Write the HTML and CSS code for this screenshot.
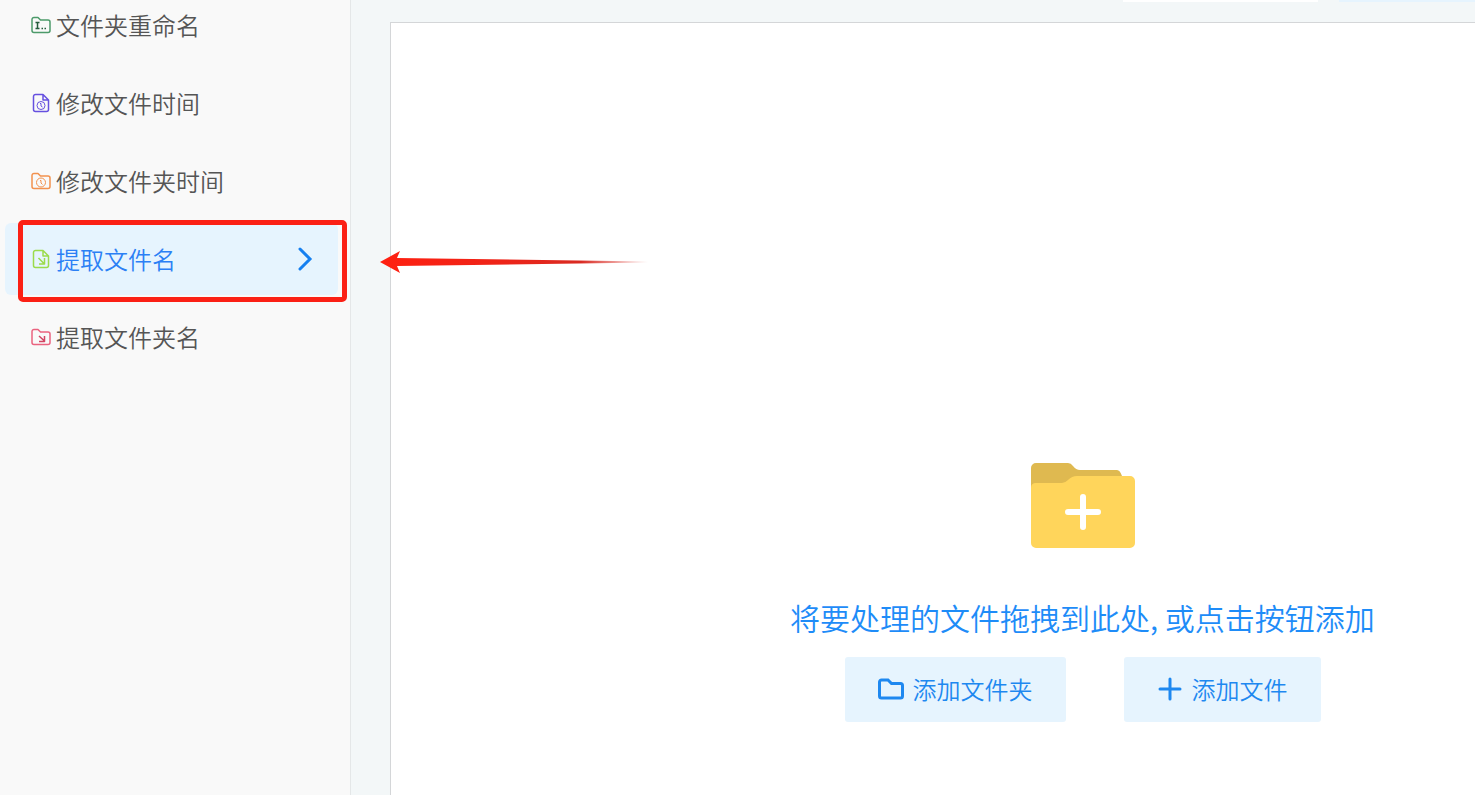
FILE: index.html
```html
<!DOCTYPE html>
<html lang="zh-CN">
<head>
  <meta charset="UTF-8">
  <meta name="viewport" content="width=device-width, initial-scale=1.0">
  <title>提取文件名</title>
  <link rel="stylesheet" href="styles.css">
</head>
<body>

  <nav class="sidebar">
    <a class="item" href="#">
      <svg class="icon green" viewBox="0 0 20 20">
        <path d="M1 15.500V4.500a2 2 0 0 1 2-2h4l2.500 2.500H17a2 2 0 0 1 2 2v8.500a2 2 0 0 1-2 2H3a2 2 0 0 1-2-2z"/>
        <path class="dark" d="M4.500 7.500h4M6.500 7.500v6M4.500 13.500h4M10.500 13.500h1.500M13.500 13.500H15"/>
      </svg>
      <span>文件夹重命名</span>
    </a>
    <a class="item" href="#">
      <svg class="icon purple" viewBox="0 0 20 20">
        <path d="M12 1.500H4.500a2 2 0 0 0-2 2v13a2 2 0 0 0 2 2h11a2 2 0 0 0 2-2V7zM12 1.500V7h5.500"/>
        <circle class="thin" cx="10" cy="12.500" r="4"/>
        <path class="thin" d="M9 10.500h1V13l1.500 1"/>
      </svg>
      <span>修改文件时间</span>
    </a>
    <a class="item" href="#">
      <svg class="icon orange" viewBox="0 0 20 20">
        <path d="M1 15.500V4.500a2 2 0 0 1 2-2h4l2.500 2.500H17a2 2 0 0 1 2 2v8.500a2 2 0 0 1-2 2H3a2 2 0 0 1-2-2z"/>
        <circle class="thin" cx="10" cy="11.500" r="4.500"/>
        <path class="thin" d="M9 9.500h1V12l1.500 1.500"/>
      </svg>
      <span>修改文件夹时间</span>
    </a>
    <a class="item active" href="#">
      <svg class="icon lime" viewBox="0 0 20 20">
        <path d="M12 1.500H4.500a2 2 0 0 0-2 2v13a2 2 0 0 0 2 2h11a2 2 0 0 0 2-2V7zM12 1.500V7h5.500"/>
        <path d="M7.500 9l5.500 5.500M13.500 9v6H8"/>
      </svg>
      <span>提取文件名</span>
      <svg class="chevron" viewBox="0 0 16 24"><path d="M3 2l10 10L3 22"/></svg>
      <i class="mark"></i>
    </a>
    <a class="item" href="#">
      <svg class="icon red" viewBox="0 0 20 20">
        <path d="M1 15.500V4.500a2 2 0 0 1 2-2h4l2.500 2.500H17a2 2 0 0 1 2 2v8.500a2 2 0 0 1-2 2H3a2 2 0 0 1-2-2z"/>
        <path class="dark" d="M8 9l5.500 5M13.500 9v5.500H8"/>
      </svg>
      <span>提取文件夹名</span>
    </a>
  </nav>

  <main class="main">
    <div class="toolbar">
      <div class="tool white"></div>
      <div class="tool blue"></div>
    </div>

    <section class="drop">
      <svg class="folder" viewBox="0 0 106 86">
        <path fill="#dfb950" d="M1 30V5a5 5 0 0 1 5-5h32q3 0 5 3 3 4 7 4h37q3 0 5 6v17z"/>
        <path fill="#ffd55b" d="M1 80V25q0-5 5-5h26q3 0 6-3 4-4 9-4h53a5 5 0 0 1 5 5v62a5 5 0 0 1-5 5H6a5 5 0 0 1-5-5z"/>
        <path stroke="#fff" stroke-width="6" stroke-linecap="round" d="M38 49h30M53 34v30"/>
      </svg>
      <p class="tip">将要处理的文件拖拽到此处, 或点击按钮添加</p>
      <div class="buttons">
        <button class="btn" type="button">
          <svg class="btn-icon" viewBox="0 0 28 28"><path d="M2.500 21V7a2 2 0 0 1 2-2h6.500l3.500 3.500H23.500a2 2 0 0 1 2 2V21a2 2 0 0 1-2 2h-19a2 2 0 0 1-2-2z"/></svg>
          添加文件夹
        </button>
        <button class="btn" type="button">
          <svg class="btn-icon" viewBox="0 0 28 28"><path d="M4 14h20M14 4v20"/></svg>
          添加文件
        </button>
      </div>
    </section>

    <svg class="arrow" viewBox="0 0 268 24">
      <defs>
        <linearGradient id="fade">
          <stop offset="0" stop-color="#ff2011"/>
          <stop offset=".45" stop-color="#ee2418"/>
          <stop offset=".75" stop-color="#d92a22"/>
          <stop offset="1" stop-color="#d92a22" stop-opacity="0"/>
        </linearGradient>
      </defs>
      <path fill="url(#fade)" d="M0 12L20 1l-3 7L268 11.500v1L17 16l3 7z"/>
    </svg>
  </main>

</body>
</html>
```
FILE: styles.css
```css
* {
  box-sizing: border-box;
}

body {
  margin: 0;
  height: 100vh;
  display: flex;
  overflow: hidden;
  background: #f3f7f8;
  font-family: "Noto Sans CJK SC", sans-serif;
  font-weight: 350;
}

svg {
  fill: none;
  flex: none;
}

/* 左侧菜单 */
.sidebar {
  flex: 0 0 351px;
  display: flex;
  flex-direction: column;
  gap: 6px;
  margin-top: -11px;
  padding: 0 12px 0 5px;
  background: #f9f9f9;
  border-right: 1px solid #e4e7e8;
}

.item {
  position: relative;
  display: flex;
  align-items: center;
  gap: 5px;
  height: 72px;
  padding: 0 25px 0 26px;
  border-radius: 6px;
  color: #555;
  font-size: 24px;
  line-height: 32px;
  text-decoration: none;
}

.item.active {
  background: #e6f4fe;
  color: #2b80f5;
}

.icon {
  width: 20px;
  height: 20px;
  stroke-width: 1.5;
  stroke-linejoin: round;
}

.thin { stroke-width: 1; }

.green { stroke: #4c9a6a; }
.green .dark { stroke: #255c3c; }
.purple { stroke: #6650e0; }
.orange { stroke: #f2914e; }
.lime { stroke: #9bdb4b; }
.red { stroke: #ea637f; }
.red .dark { stroke: #d24563; }

.chevron {
  width: 16px;
  height: 24px;
  margin-left: auto;
  stroke: #1680f0;
  stroke-width: 3;
  stroke-linecap: round;
}

.mark {
  position: absolute;
  top: -3px;
  left: 13px;
  right: -9px;
  bottom: -7px;
  border: 5px solid #fb2015;
  border-radius: 5px;
}

/* 右侧内容 */
.main {
  position: relative;
  flex: 1;
  display: flex;
  flex-direction: column;
  padding-left: 39px;
}

.toolbar {
  height: 22px;
  display: flex;
  justify-content: flex-end;
  gap: 21px;
}

.tool {
  height: 2px;
}

.tool.white {
  width: 195px;
  background: #fff;
}

.tool.blue {
  width: 136px;
  background: #e6f4fe;
}

.drop {
  flex: 1;
  display: flex;
  flex-direction: column;
  align-items: center;
  justify-content: flex-end;
  padding: 0 0 73px 299px;
  background: #fff;
  border-top: 1px solid #d4d6d8;
  border-left: 1px solid #d4d6d8;
}

.folder {
  width: 106px;
  height: 86px;
}

.tip {
  margin: 46px 0 18px;
  color: #1e8cf8;
  font-size: 30px;
  line-height: 44px;
  white-space: nowrap;
}

.buttons {
  display: flex;
  gap: 58px;
}

.btn {
  display: flex;
  align-items: center;
  gap: 8px;
  height: 65px;
  padding: 0 33px 2px 32px;
  border: none;
  border-radius: 3px;
  background: #e6f4fe;
  color: #1e88f0;
  font: inherit;
  font-size: 24px;
  cursor: pointer;
}

.btn-icon {
  width: 28px;
  height: 28px;
  stroke: #1e88f0;
  stroke-width: 3;
  stroke-linecap: round;
}

.arrow {
  position: absolute;
  top: 250px;
  left: 29px;
  width: 268px;
  height: 24px;
}
```
